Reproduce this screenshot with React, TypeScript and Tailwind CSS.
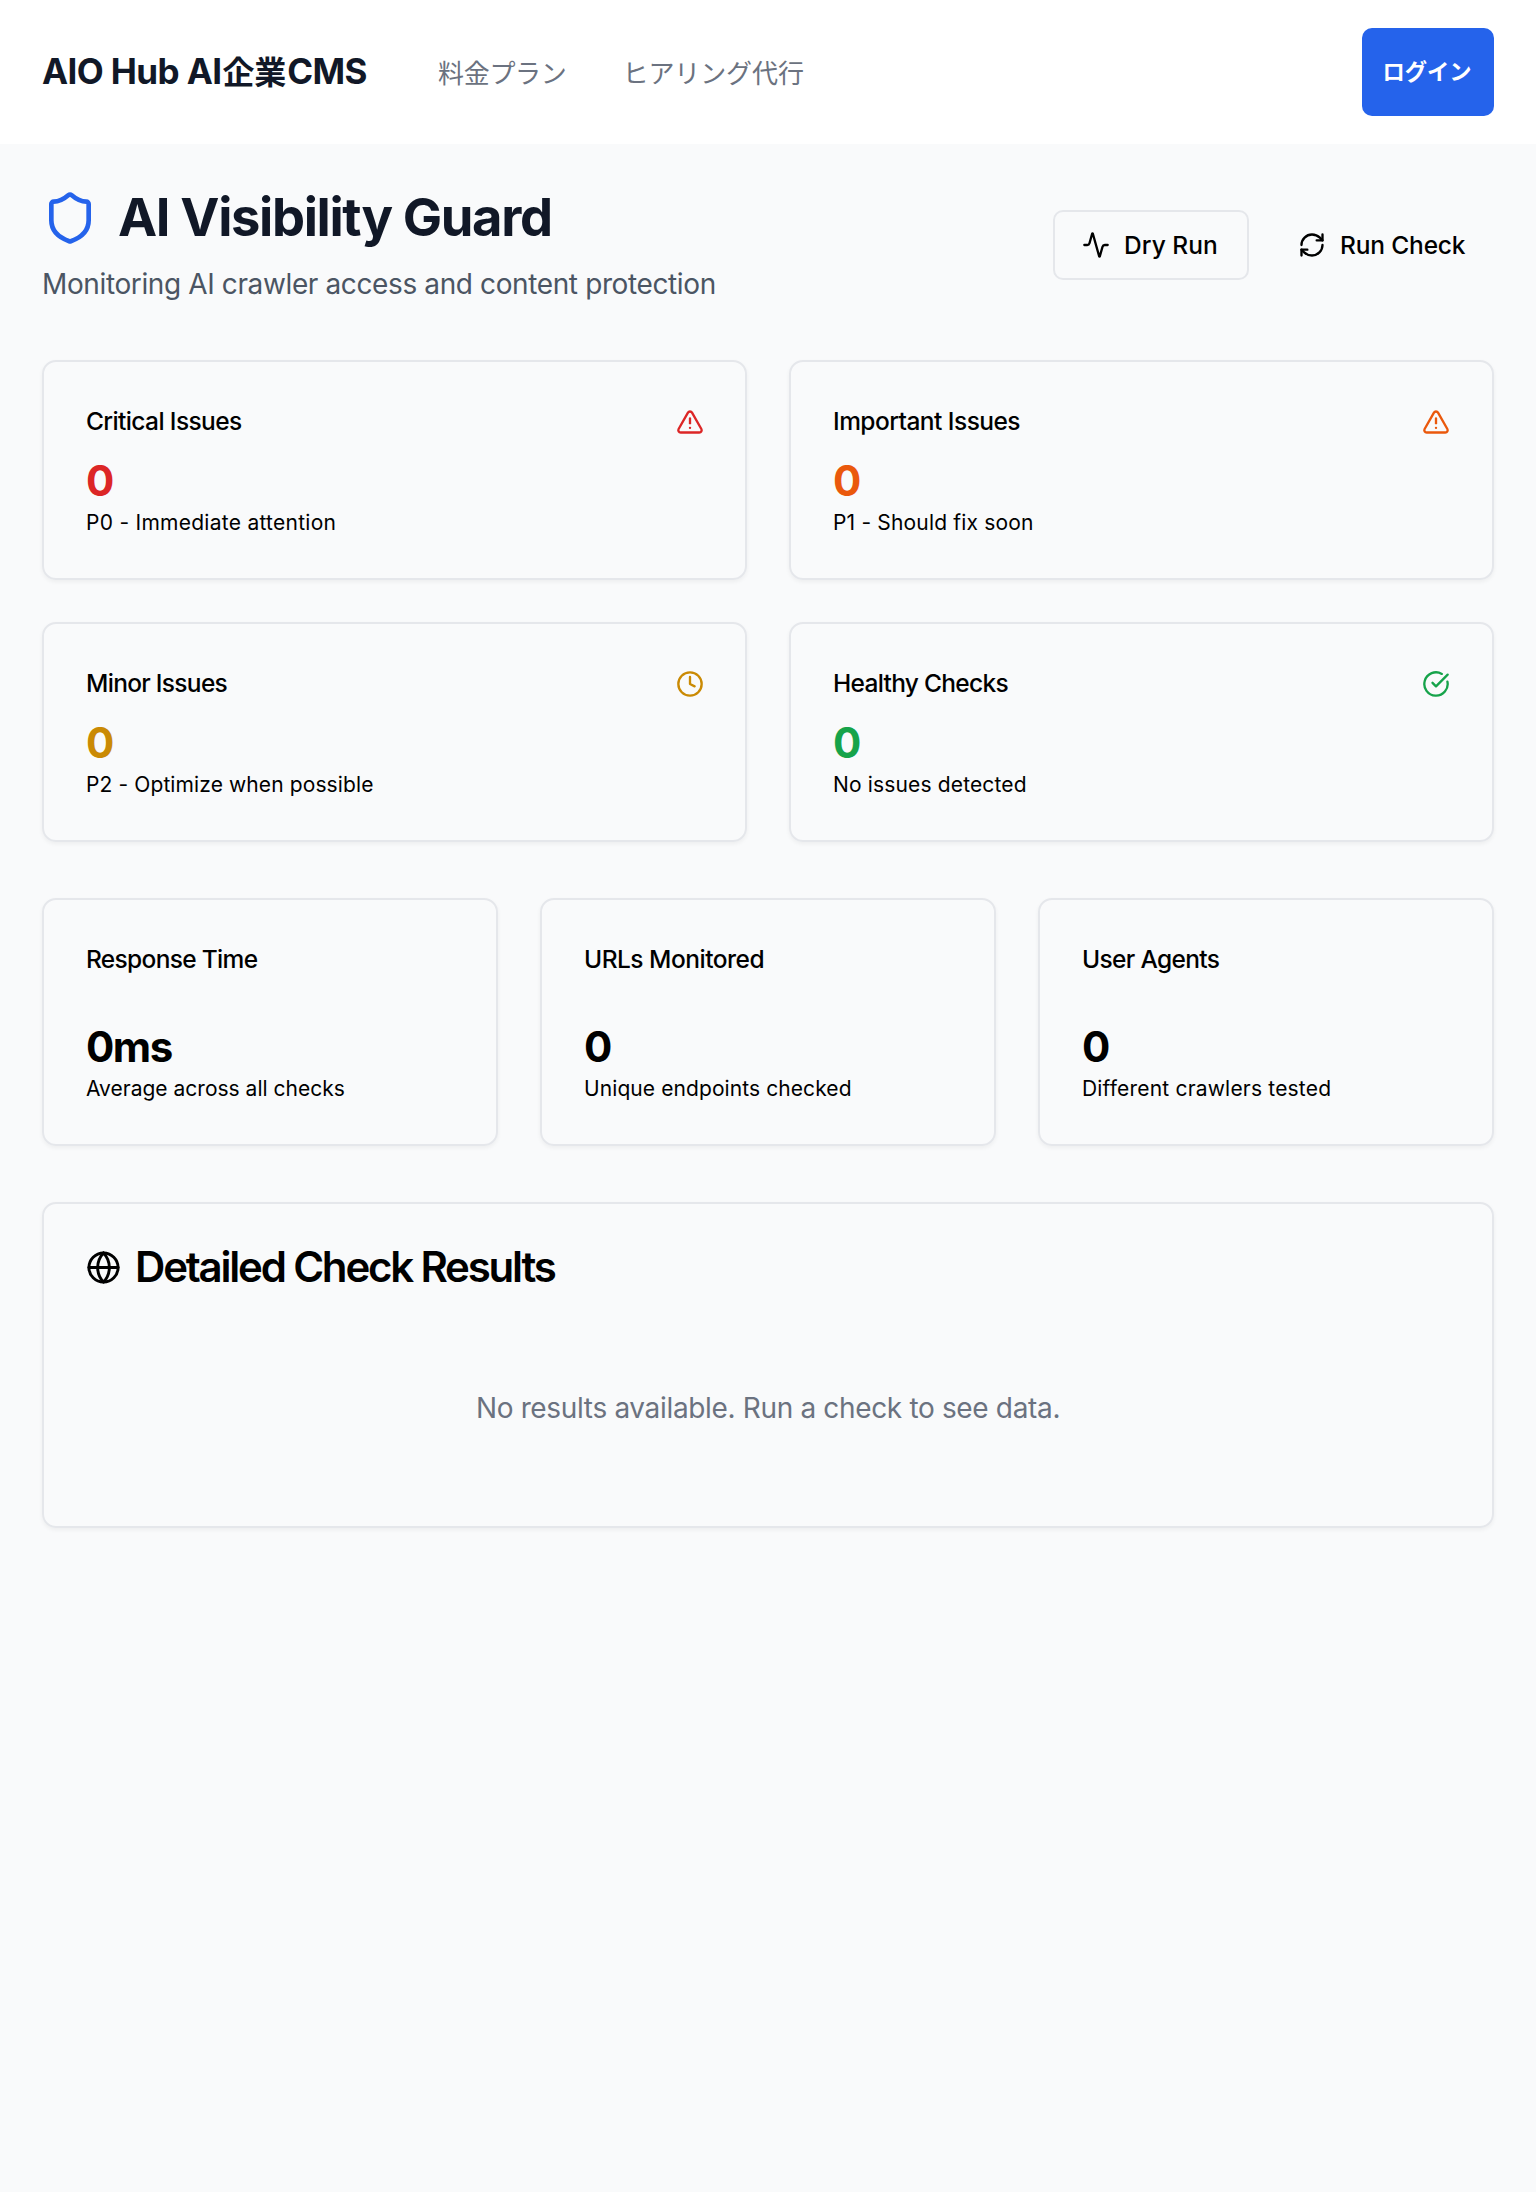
import React from "react";
import { Activity, CircleCheckBig, Clock, Globe, RefreshCw, Shield, TriangleAlert } from "lucide-react";

const card = "rounded-[14px] border-2 border-[#e5e7eb] p-[42px] shadow-[0_2px_4px_rgba(0,0,0,0.05)]";

const issues = [
  { title: "Critical Issues", titleClass: "tracking-[-0.62px]", note: "P0 - Immediate attention", noteClass: "tracking-[0.27px]", color: "text-[#dc2626]", iconClass: "-mr-px", Icon: TriangleAlert },
  { title: "Important Issues", titleClass: "tracking-[-0.54px]", note: "P1 - Should fix soon", noteClass: "tracking-[0.18px]", color: "text-[#ea580c]", iconClass: "mr-0", Icon: TriangleAlert },
  { title: "Minor Issues", titleClass: "tracking-[-0.7px]", note: "P2 - Optimize when possible", noteClass: "tracking-[0.11px]", color: "text-[#ca8a04]", iconClass: "-mr-px", Icon: Clock },
  { title: "Healthy Checks", titleClass: "tracking-[-0.7px]", note: "No issues detected", noteClass: "tracking-[0.15px]", color: "text-[#16a34a]", iconClass: "mr-0", Icon: CircleCheckBig },
];

const stats = [
  { title: "Response Time", titleClass: "tracking-[-0.68px]", value: "0ms", note: "Average across all checks", noteClass: "tracking-[0.01px]" },
  { title: "URLs Monitored", titleClass: "tracking-[-0.5px]", value: "0", note: "Unique endpoints checked", noteClass: "tracking-[0.09px]" },
  { title: "User Agents", titleClass: "tracking-[-0.65px]", value: "0", note: "Different crawlers tested", noteClass: "tracking-[0.19px]" },
];

function SiteHeader() {
  return (
    <header className="flex h-36 items-center bg-white px-[42px]">
      <div className="flex w-[396px] items-baseline whitespace-nowrap text-[35px] font-bold leading-[49px] tracking-[-0.6px] text-[#111827]">
        <span>AIO Hub AI</span>
        <span className="ml-px text-[32px] tracking-[-0.1px]">企業</span>
        <span className="ml-px">CMS</span>
      </div>
      <nav className="flex gap-[56px] pt-[2px] text-[26px] leading-[35px] text-[#6b7280]">
        <a className="tracking-[-0.3px]">料金プラン</a>
        <a className="tracking-[-0.1px]">ヒアリング代行</a>
      </nav>
      <button className="ml-auto flex h-[88px] w-[132px] items-center justify-center rounded-[10px] bg-[#2563eb] pb-[2px] pr-[2px] text-[22.3px] font-bold leading-[35px] text-white">
        ログイン
      </button>
    </header>
  );
}

export default function App() {
  return (
    <div className="min-h-[2192px] bg-[#f9fafb] font-['Inter','Noto_Sans_CJK_JP',sans-serif] text-black">
      <SiteHeader />
      <main className="px-[42px] pt-[42px]">
        <div className="mb-[55px] flex items-center justify-between">
          <div>
            <div className="flex items-center gap-5">
              <Shield className="size-14 text-[#2563eb]" />
              <h1 className="whitespace-nowrap text-[52.5px] font-bold leading-[63px] tracking-[-1.35px] text-[#111827]">AI Visibility Guard</h1>
            </div>
            <p className="mt-[14px] whitespace-nowrap text-[28px] leading-[42px] tracking-[-0.38px] text-[#4b5563]">
              Monitoring AI crawler access and content protection
            </p>
          </div>
          <div className="flex gap-[21px] whitespace-nowrap pb-px text-[24.5px] font-medium leading-[35px]">
            <button className="flex h-[70px] w-[196px] items-center gap-[14px] rounded-[10px] border-2 border-[#e5e7eb] pl-[27px]">
              <Activity className="size-7" />
              <span className="tracking-[0.05px]">Dry Run</span>
            </button>
            <button className="flex h-[70px] w-[224px] items-center gap-[14px] rounded-[10px] px-7">
              <RefreshCw className="size-7" />
              <span className="tracking-[-0.16px]">Run Check</span>
            </button>
          </div>
        </div>

        <div className="grid grid-cols-2 gap-[42px]">
          {issues.map(({ title, titleClass, note, noteClass, color, iconClass, Icon }) => (
            <section key={title} className={card}>
              <div className="flex items-center justify-between pb-[14px]">
                <h3 className={`text-[24.5px] font-medium leading-[35px] ${titleClass}`}>{title}</h3>
                <Icon className={`size-7 ${color} ${iconClass}`} />
              </div>
              <div className={`text-[42px] font-bold leading-[56px] ${color}`}>0</div>
              <p className={`text-[21px] leading-[27px] ${noteClass}`}>{note}</p>
            </section>
          ))}
        </div>

        <div className="mt-14 grid grid-cols-3 gap-[42px]">
          {stats.map(({ title, titleClass, value, note, noteClass }) => (
            <section key={title} className={card}>
              <h3 className={`mb-[42px] text-[24.5px] font-medium leading-[35px] ${titleClass}`}>{title}</h3>
              <div className="text-[42px] font-bold leading-[56px] tracking-[-1.5px]">{value}</div>
              <p className={`text-[21px] leading-[27px] ${noteClass}`}>{note}</p>
            </section>
          ))}
        </div>

        <section className={`mt-14 ${card}`}>
          <h2 className="flex items-center gap-[14px] whitespace-nowrap text-[42px] font-semibold leading-[42px] tracking-[-2.2px]">
            <Globe className="size-[35px]" />
            Detailed Check Results
          </h2>
          <p className="mt-[42px] pb-[55px] pt-[57px] text-center text-[28px] leading-[42px] tracking-[-0.34px] text-[#6b7280]">
            No results available. Run a check to see data.
          </p>
        </section>
      </main>
    </div>
  );
}
